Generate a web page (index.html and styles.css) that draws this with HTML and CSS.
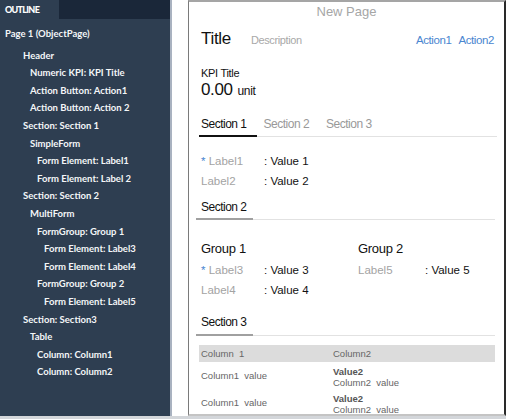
FILE: index.html
```html
<!DOCTYPE html>
<html>
<head>
<meta charset="utf-8">
<link rel="stylesheet" href="styles.css">
</head>
<body>
<div class="main">
  <aside class="outline">
    <div class="outline-head"><div class="outline-tab">OUTLINE</div></div>
    <ul class="tree">
      <li class="t0 page">Page 1 (ObjectPage)</li>
      <li class="t1">Header</li>
      <li class="t2">Numeric KPI: KPI Title</li>
      <li class="t2">Action Button: Action1</li>
      <li class="t2">Action Button: Action 2</li>
      <li class="t1">Section: Section 1</li>
      <li class="t2">SimpleForm</li>
      <li class="t3">Form Element: Label1</li>
      <li class="t3">Form Element: Label 2</li>
      <li class="t1">Section: Section 2</li>
      <li class="t2">MultiForm</li>
      <li class="t3">FormGroup: Group 1</li>
      <li class="t4">Form Element: Label3</li>
      <li class="t4">Form Element: Label4</li>
      <li class="t3">FormGroup: Group 2</li>
      <li class="t4">Form Element: Label5</li>
      <li class="t1">Section: Section3</li>
      <li class="t2">Table</li>
      <li class="t3">Column: Column1</li>
      <li class="t3">Column: Column2</li>
    </ul>
  </aside>
  <div class="spacer"></div>
  <section class="frame">
    <div class="np">New Page</div>
    <div class="hdr">
      <span class="title">Title</span>
      <span class="desc">Description</span>
      <span class="actions"><a class="act">Action1</a><a class="act">Action2</a></span>
    </div>
    <div class="kpi-title">KPI Title</div>
    <div class="kpi-val"><span class="num">0.00</span><span class="unit">unit</span></div>
    <div class="tabs">
      <div class="tab active">Section 1</div>
      <div class="tab">Section 2</div>
      <div class="tab">Section 3</div>
    </div>
    <div class="form f1">
      <div class="row"><span class="lbl"><span class="req">*</span> Label1</span><span class="val">: Value 1</span></div>
      <div class="row"><span class="lbl">Label2</span><span class="val">: Value 2</span></div>
    </div>
    <div class="sec s2"><div class="sec-t">Section 2</div></div>
    <div class="groups">
      <div class="group">
        <div class="g-title">Group 1</div>
        <div class="row"><span class="lbl"><span class="req">*</span> Label3</span><span class="val">: Value 3</span></div>
        <div class="row"><span class="lbl">Label4</span><span class="val">: Value 4</span></div>
      </div>
      <div class="group">
        <div class="g-title">Group 2</div>
        <div class="row"><span class="lbl">Label5</span><span class="val">: Value 5</span></div>
      </div>
    </div>
    <div class="sec s3"><div class="sec-t">Section 3</div></div>
    <div class="table">
      <div class="th"><span class="c1">Column&nbsp; 1</span><span class="c2">Column2</span></div>
      <div class="tr"><span class="c1">Column1&nbsp; value</span><span class="c2"><b>Value2</b><br>Column2&nbsp; value</span></div>
      <div class="tr"><span class="c1">Column1&nbsp; value</span><span class="c2"><b>Value2</b><br>Column2&nbsp; value</span></div>
    </div>
  </section>
</div>
<div class="foot"></div>
</body>
</html>
```
FILE: styles.css
```css
* { box-sizing: border-box; }
html, body { margin: 0; padding: 0; }
body {
  width: 506px;
  height: 419px;
  overflow: hidden;
  background: #fff;
  font-family: "Liberation Sans", Arial, sans-serif;
}
.main { display: flex; height: 416px; }
.foot { height: 3px; background: #d3d6da; }

.outline {
  width: 172px;
  flex: none;
  background: #2e3e51;
  border-right: 2px solid #a9b2c0;
  color: #f4f6f8;
  font-family: Lato, "Open Sans", sans-serif;
  font-weight: 700;
}
.outline-head { height: 19px; background: #1a2739; display: flex; }
.outline-tab {
  width: 59px;
  background: #2e3e51;
  font-size: 9px;
  font-weight: 900;
  line-height: 19px;
  padding-left: 5px;
  letter-spacing: -0.7px;
  color: #fff;
}
.tree { list-style: none; margin: 0; padding: 6px 0 0 0; font-size: 9.5px; }
.tree li { height: 17.6px; line-height: 17.6px; white-space: nowrap; }
.tree .page { margin-bottom: 4px; }
.t0 { padding-left: 5px; }
.t1 { padding-left: 23px; }
.t2 { padding-left: 30px; }
.t3 { padding-left: 37px; }
.t4 { padding-left: 44px; }

.spacer { width: 16px; flex: none; }

.frame {
  width: 318px;
  flex: none;
  height: 416px;
  overflow: hidden;
  border-left: 1px solid #7a7a7a;
  border-top: 2px solid #a5a5a5;
  border-right: 2px solid #2a2a2a;
  border-bottom: 2px solid #c4c4c4;
  color: #111;
}
.np { height: 19px; line-height: 19px; text-align: center; font-size: 13px; color: #a6a6a6; }
.hdr {
  margin-top: 8px;
  display: flex;
  align-items: baseline;
  padding: 0 10px 0 12px;
  line-height: 20px;
}
.title { font-size: 17px; letter-spacing: -0.3px; color: #111; }
.desc { font-size: 11px; color: #a8a8a8; margin-left: 20px; letter-spacing: -0.4px; }
.actions { margin-left: auto; display: flex; gap: 7px; }
.act { font-size: 11.5px; color: #4a86d0; letter-spacing: -0.4px; }

.kpi-title { margin-top: 15px; padding-left: 12px; font-size: 11px; line-height: 17px; letter-spacing: -0.3px; }
.kpi-val { display: flex; align-items: baseline; padding-left: 12px; line-height: 16px; }
.num { font-size: 17px; letter-spacing: -0.4px; }
.unit { font-size: 12px; margin-left: 5px; letter-spacing: -0.3px; }

.tabs {
  margin: 14px 7px 0 10px;
  display: flex;
  gap: 5px;
  border-bottom: 1px solid #e2e2e2;
}
.tab {
  font-size: 12px;
  letter-spacing: -0.5px;
  line-height: 22px;
  padding: 0 10px 0 2px;
  color: #999;
}
.tab.active { color: #111; border-bottom: 2px solid #111; margin-bottom: -1px; }

.form { padding-left: 12px; }
.f1 { margin-top: 14px; }
.row { display: flex; line-height: 20px; font-size: 11.5px; }
.lbl { width: 63px; flex: none; color: #a3a3a3; }
.req { color: #4a86d0; }
.val { color: #111; }

.sec { margin: 5px 9px 0 7px; border-bottom: 1px solid #e2e2e2; display: flex; }
.sec-t {
  font-size: 12px;
  letter-spacing: -0.5px;
  padding: 0 6px 0 5px;
  border-bottom: 2px solid #a0a0a0;
  margin-bottom: -1px;
  color: #111;
}
.s2 .sec-t { line-height: 22px; }
.s3 { margin-top: 10px; }
.s3 .sec-t { line-height: 24px; }

.groups { display: flex; padding-left: 12px; margin-top: 18px; }
.group { width: 157px; flex: none; }
.group + .group { width: auto; flex: 1; }
.g-title { font-size: 13px; line-height: 22px; margin-bottom: 0; letter-spacing: -0.3px; color: #111; }
.group .row .lbl { width: 63px; }
.group + .group .row .lbl { width: 67px; }

.table { margin: 9px 9px 0 10px; font-size: 9.5px; color: #666; }
.th { display: flex; background: #dcdcdc; height: 17px; line-height: 17px; }
.tr { display: flex; align-items: center; height: 27px; line-height: 11.5px; padding-top: 3.5px; }
.tr .c1 { align-self: center; margin-top: -3px; }
.c1 { width: 134px; padding-left: 2px; flex: none; }
.c2 { flex: 1; }
.c2 b { color: #555; }
```
